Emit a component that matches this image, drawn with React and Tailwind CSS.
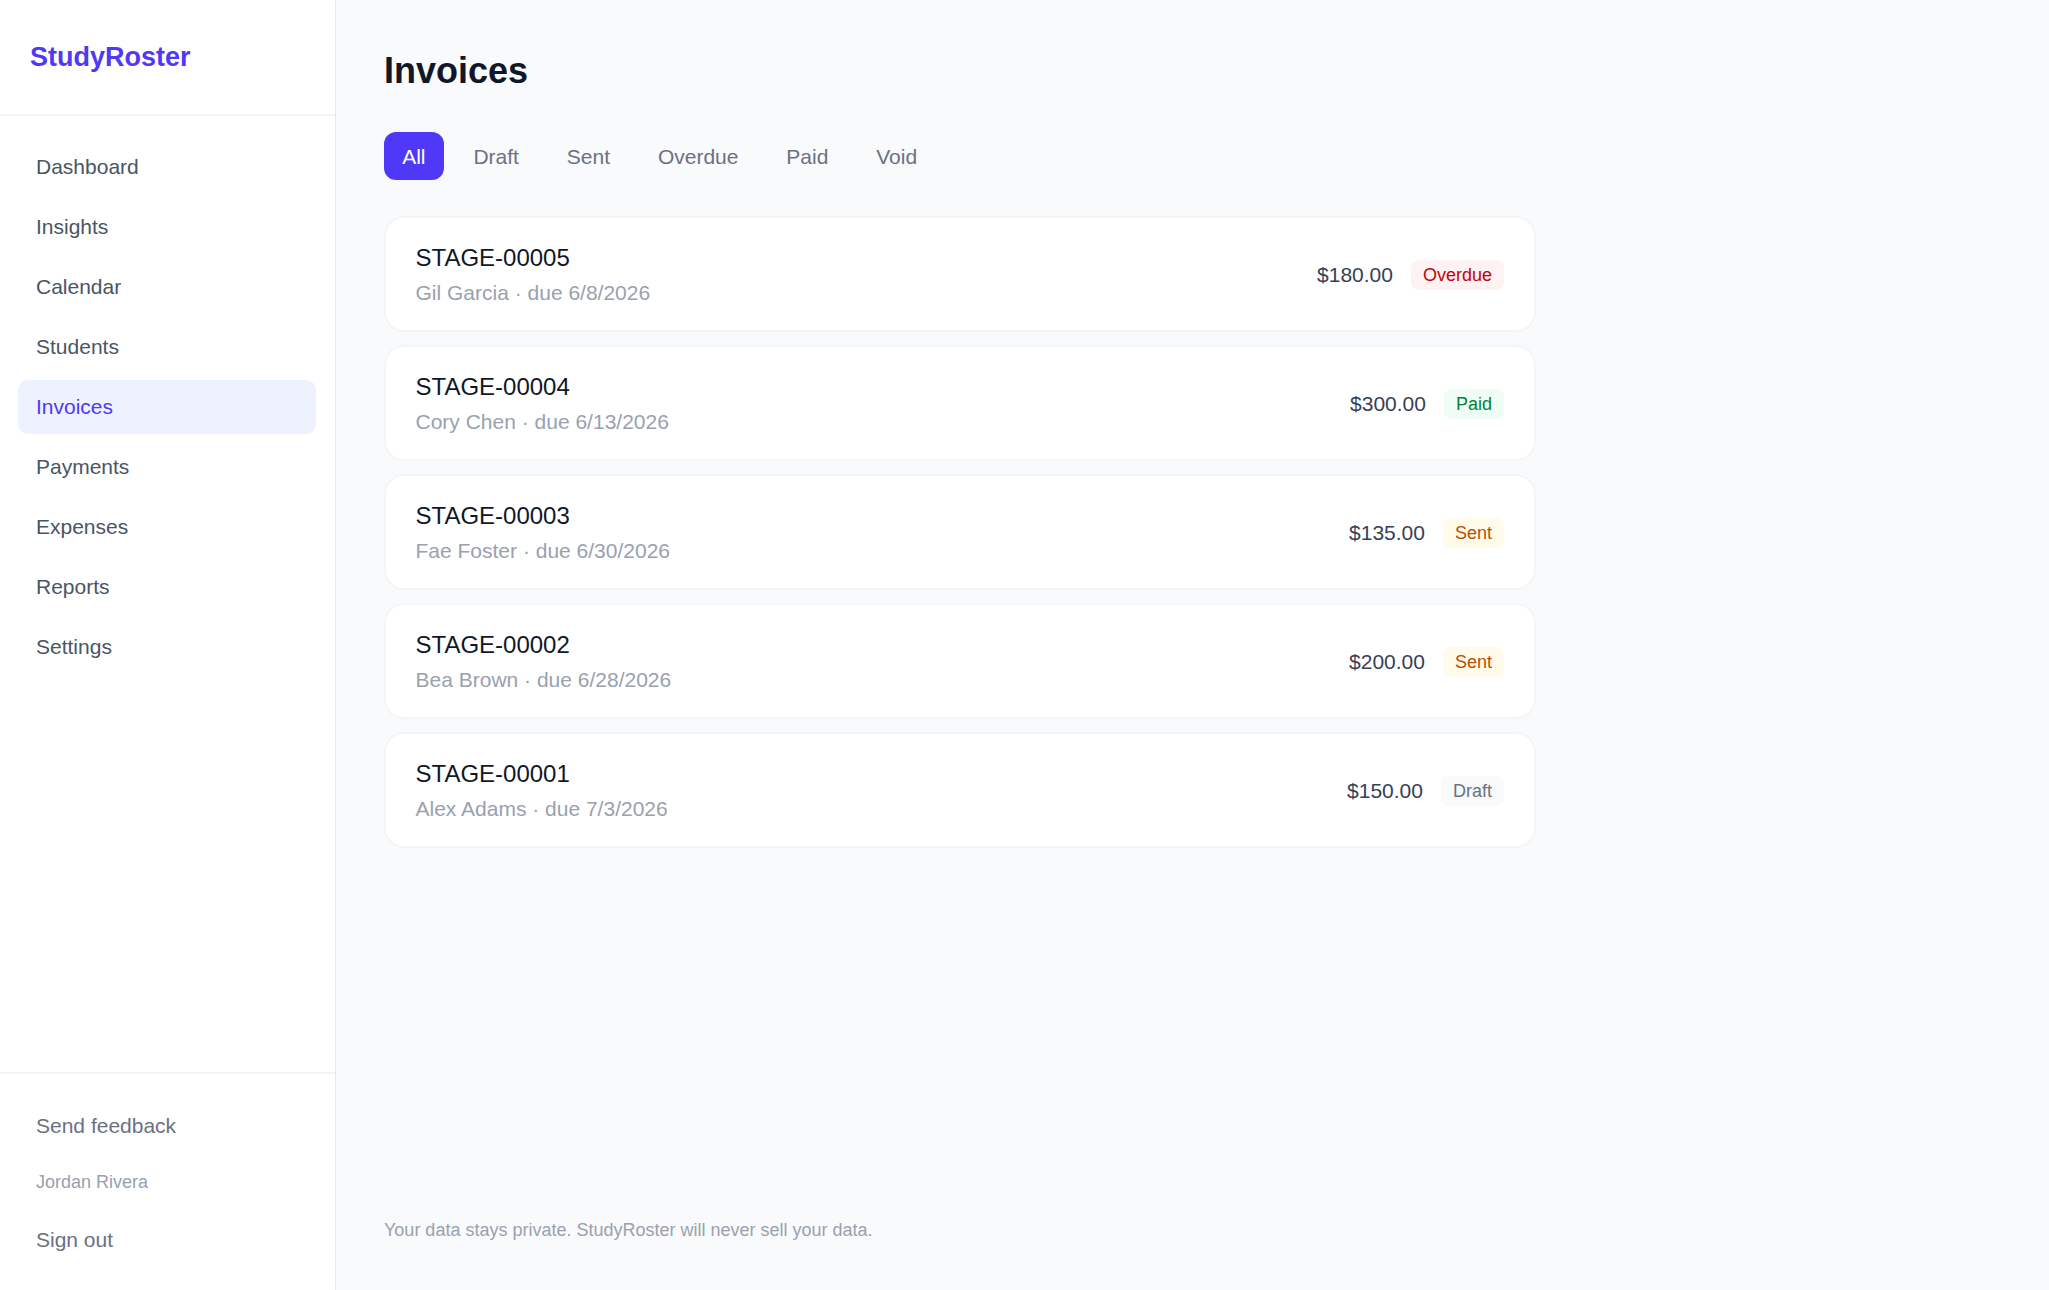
import React from 'react';

const navItems = ['Dashboard', 'Insights', 'Calendar', 'Students', 'Invoices', 'Payments', 'Expenses', 'Reports', 'Settings'];
const tabs = ['All', 'Draft', 'Sent', 'Overdue', 'Paid', 'Void'];

const invoices = [
  { id: 'STAGE-00005', who: 'Gil Garcia', due: '6/8/2026', amount: '$180.00', status: 'Overdue' },
  { id: 'STAGE-00004', who: 'Cory Chen', due: '6/13/2026', amount: '$300.00', status: 'Paid' },
  { id: 'STAGE-00003', who: 'Fae Foster', due: '6/30/2026', amount: '$135.00', status: 'Sent' },
  { id: 'STAGE-00002', who: 'Bea Brown', due: '6/28/2026', amount: '$200.00', status: 'Sent' },
  { id: 'STAGE-00001', who: 'Alex Adams', due: '7/3/2026', amount: '$150.00', status: 'Draft' },
];

const badgeStyles = {
  Overdue: 'bg-red-50 text-red-700',
  Paid: 'bg-green-50 text-green-700',
  Sent: 'bg-amber-50 text-amber-700',
  Draft: 'bg-gray-50 text-gray-500',
};

const Sidebar = () => (
  <aside className="flex h-full w-[336px] shrink-0 flex-col border-r border-gray-200 bg-white">
    <div className="flex h-[116px] items-center border-b-2 border-gray-100 pl-[30px]">
      <span className="text-[27px] font-bold text-indigo-600">StudyRoster</span>
    </div>
    <nav className="flex flex-1 flex-col gap-[6px] pl-[18px] pr-[19px] pt-[24px]">
      {navItems.map((item) => (
        <a
          key={item}
          href="#"
          className={`flex h-[54px] items-center rounded-[10px] px-[18px] text-[21px] ${
            item === 'Invoices' ? 'bg-indigo-50 text-indigo-600' : 'text-gray-600'
          }`}
        >
          {item}
        </a>
      ))}
    </nav>
    <div className="flex h-[218px] flex-col border-t-2 border-gray-100 px-[36px] pt-[34px]">
      <a href="#" className="text-[21px] leading-[36px] text-gray-500">Send feedback</a>
      <span className="mt-[20px] text-[18px] leading-[36px] text-gray-400">Jordan Rivera</span>
      <a href="#" className="mt-[22px] text-[21px] leading-[36px] text-gray-500">Sign out</a>
    </div>
  </aside>
);

const InvoiceRow = ({ invoice }) => (
  <div className="flex h-[116px] items-center justify-between rounded-[20px] border-2 border-[#f4f5f7] bg-white pt-[2px] pl-[29.5px] pr-[30px]">
    <div>
      <p className="text-[24px] leading-[35px] text-gray-900">{invoice.id}</p>
      <p className="text-[21px] leading-[35px] text-gray-400">
        {invoice.who} · due {invoice.due}
      </p>
    </div>
    <div className="flex items-center gap-[18px]">
      <span className="text-[21px] text-gray-700">{invoice.amount}</span>
      <span className={`rounded-[8px] px-[12px] py-[2px] text-[18px] leading-[26px] ${badgeStyles[invoice.status]}`}>
        {invoice.status}
      </span>
    </div>
  </div>
);

export default function App() {
  return (
    <div className="flex h-screen bg-gray-50 font-['Liberation_Sans',sans-serif]">
      <Sidebar />
      <main className="flex flex-1 flex-col pl-[48px] pt-[47px] pb-[46px]">
        <h1 className="text-[36px] leading-[48px] font-bold text-gray-900">Invoices</h1>
        <div className="mt-[37px] flex gap-[11.5px]">
          {tabs.map((tab) => (
            <button
              key={tab}
              className={`h-[48px] rounded-[12px] px-[18.2px] pt-[1px] text-[21px] ${
                tab === 'All' ? 'bg-indigo-600 text-white' : 'text-gray-500'
              }`}
            >
              {tab}
            </button>
          ))}
        </div>
        <div className="mt-[36px] flex w-[1152px] flex-col gap-[13px]">
          {invoices.map((invoice) => (
            <InvoiceRow key={invoice.id} invoice={invoice} />
          ))}
        </div>
        <p className="mt-auto text-[18px] leading-[28px] text-gray-400">
          Your data stays private. StudyRoster will never sell your data.
        </p>
      </main>
    </div>
  );
}
